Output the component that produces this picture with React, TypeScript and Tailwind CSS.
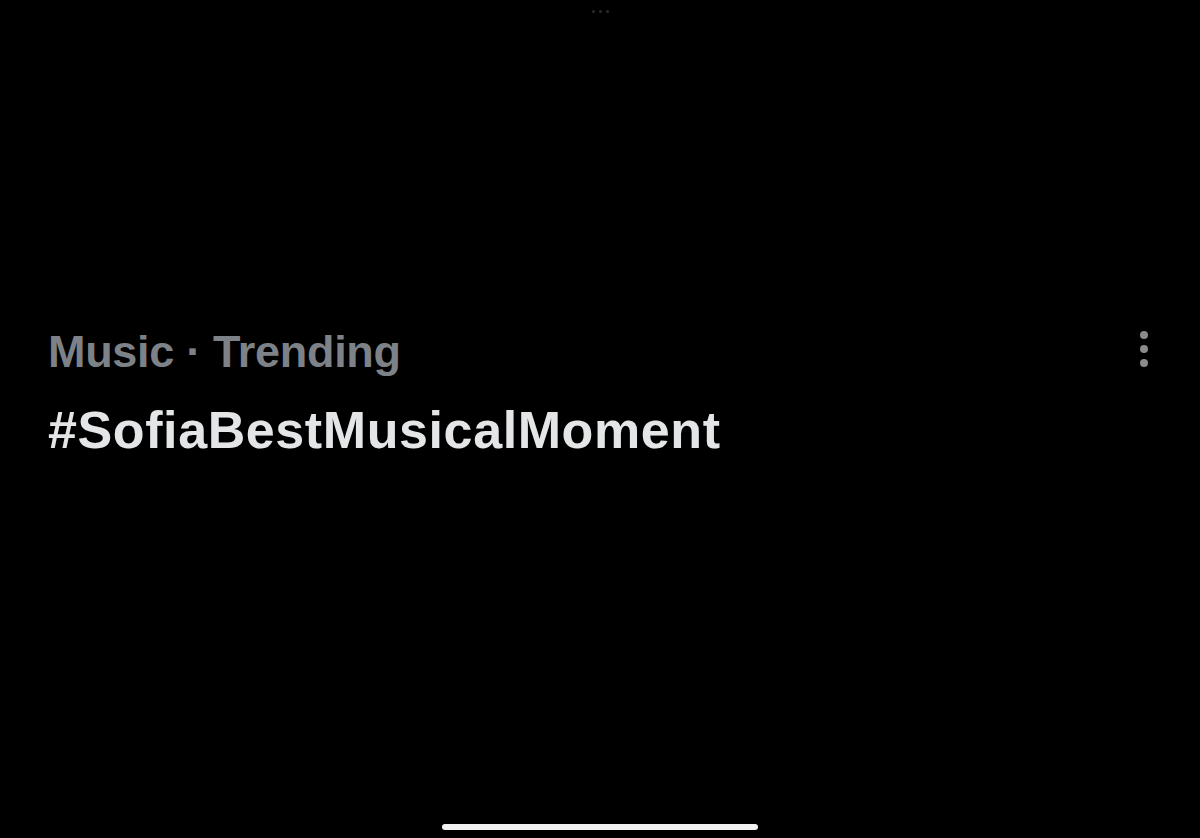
import React from 'react';

export default function App() {
  return (
    <div className="flex h-[838px] w-[1200px] flex-col items-center overflow-hidden bg-black" style={{ fontFamily: '"Liberation Sans", Arial, sans-serif' }}>
      {/* grabber dots */}
      <div className="mt-[10px] flex gap-[4px]">
        <span className="h-[3px] w-[3px] rounded-full bg-[#2a2a2a]" />
        <span className="h-[3px] w-[3px] rounded-full bg-[#2a2a2a]" />
        <span className="h-[3px] w-[3px] rounded-full bg-[#2a2a2a]" />
      </div>

      {/* trend row */}
      <div className="mt-[313px] flex w-full items-start justify-between pl-[48px] pr-[52px]">
        <div className="flex flex-col">
          <div className="text-[45px] font-bold leading-[52px] tracking-[-0.3px] text-[#7d8288]">Music · Trending</div>
          <div className="mt-[22px] text-[52px] font-bold leading-[60px] tracking-[0.6px] text-[#e3e5e6]">#SofiaBestMusicalMoment</div>
        </div>
        <div className="mt-[5px] flex flex-col gap-[6px]">
          <span className="h-[8px] w-[8px] rounded-full bg-[#8a8a8a]" />
          <span className="h-[8px] w-[8px] rounded-full bg-[#8a8a8a]" />
          <span className="h-[8px] w-[8px] rounded-full bg-[#8a8a8a]" />
        </div>
      </div>

      <div className="flex-1" />
      {/* home indicator */}
      <div className="mb-[8px] h-[6px] w-[316px] rounded-full bg-[#f2f2f2]" />
    </div>
  );
}
